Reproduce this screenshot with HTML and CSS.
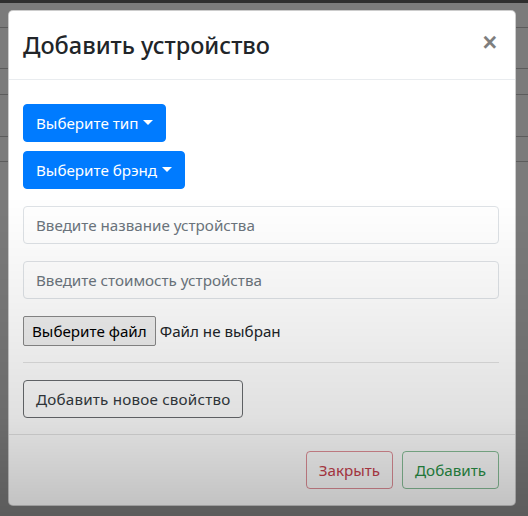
FILE: index.html
```html
<!DOCTYPE html>
<html lang="ru">
<head>
<meta charset="utf-8">
<title>Добавить устройство</title>
<link rel="stylesheet" href="styles.css">
</head>
<body>
<div class="page">
  <div class="topbar"></div>
  <div class="bg-row h25"></div>
  <div class="bg-row h41"></div>
  <div class="bg-row h26"></div>
  <div class="bg-row h42"></div>
  <div class="bg-row h25"></div>
</div>

<div class="modal">
  <div class="modal-content">
    <div class="modal-header">
      <h4 class="modal-title">Добавить устройство</h4>
      <button class="close" type="button">×</button>
    </div>
    <div class="modal-body">
      <div class="stack">
        <div class="dropdown first"><button class="btn btn-primary dropdown-toggle" type="button">Выберите тип</button></div>
        <div class="dropdown second"><button class="btn btn-primary dropdown-toggle" type="button">Выберите брэнд</button></div>
        <input class="form-control gap" type="text" placeholder="Введите название устройства">
        <input class="form-control gap" type="text" placeholder="Введите стоимость устройства">
        <div class="file gap"><span class="file-btn">Выберите файл</span><span class="file-name">Файл не выбран</span></div>
        <hr class="divider">
        <div><button class="btn btn-outline-dark" type="button">Добавить новое свойство</button></div>
      </div>
    </div>
    <div class="modal-footer">
      <button class="btn btn-outline-danger" type="button">Закрыть</button>
      <button class="btn btn-outline-success" type="button">Добавить</button>
    </div>
  </div>
</div>
<div class="shade"></div>
</body>
</html>
```
FILE: styles.css
```css
* { box-sizing: border-box; }
html, body { margin: 0; padding: 0; }
body {
  width: 528px;
  height: 516px;
  overflow: hidden;
  background: #7b7b7b;
  font-family: "Noto Sans", "Open Sans", sans-serif;
  font-size: 15.2px;
  color: #212529;
}
.page { display: flex; flex-direction: column; }
.topbar { height: 3px; background: #2e2e2e; }
.bg-row { border-bottom: 1px solid #5c5c5c; }
.h25 { height: 25px; }
.h26 { height: 26px; }
.h41 { height: 41px; }
.h42 { height: 42px; }

.modal {
  position: absolute;
  left: 8px;
  top: 10px;
  width: 508px;
}
.modal-content {
  background: #fff;
  border: 1px solid rgba(0,0,0,.2);
  border-radius: 5px;
  display: flex;
  flex-direction: column;
}
.modal-header {
  display: flex;
  align-items: flex-start;
  padding: 16px 16px 16px 14px;
  border-bottom: 1px solid #e9ecef;
}
.modal-title {
  margin: 0;
  font-size: 23.5px;
  font-weight: 500;
  line-height: 36px;
  color: #212529;
}
.close {
  margin: -16px -16px -16px auto;
  padding: 18px 18px 14px 16px;
  background: transparent;
  border: 0;
  font-family: "Liberation Sans", Arial, sans-serif;
  font-size: 25px;
  font-weight: 700;
  line-height: 26px;
  color: #000;
  opacity: .5;
}
.modal-body { padding: 16px 16px 16px 14px; }
.stack { display: flex; flex-direction: column; align-items: stretch; }
.first { margin-top: 8px; }
.second { margin-top: 9px; }
.gap { margin-top: 17px; }

.btn {
  display: inline-block;
  font-family: inherit;
  font-size: 15.2px;
  line-height: 24px;
  padding: 6px 12px;
  border: 1px solid transparent;
  border-radius: 4px;
  background: transparent;
  height: 38px;
}
.btn-primary { background: #007bff; border-color: #007bff; color: #fff; }
.dropdown-toggle::after {
  content: "";
  display: inline-block;
  margin-left: 5px;
  vertical-align: 4px;
  border-top: 5px solid #fff;
  border-right: 5px solid transparent;
  border-left: 5px solid transparent;
}
.btn-outline-dark { border-color: #6a6d70; color: #343a40; letter-spacing: 0.2px; }
.btn-outline-danger { border-color: rgba(205, 70, 85, .6); color: #c9414e; }
.btn-outline-success { border-color: rgba(40, 140, 70, .55); color: #2a9347; }

.form-control {
  display: block;
  width: 100%;
  height: 38px;
  padding: 6px 12px;
  font-family: inherit;
  font-size: 15.2px;
  line-height: 24px;
  color: #495057;
  border: 1px solid #dee2e6;
  border-radius: 4px;
  background: #fff;
}
.form-control::placeholder { color: #6c757d; opacity: 1; }

.file { display: flex; align-items: center; height: 30px; }
.file-btn {
  height: 30px;
  padding: 2px 8px;
  line-height: 24px;
  background: #efefef;
  border: 1px solid #8a8a8a;
  border-radius: 2px;
  color: #000;
}
.file-name { margin-left: 4px; color: #212529; }

.divider {
  margin: 16px 0 17px;
  border: 0;
  border-top: 1px solid #e4e4e4;
  width: 100%;
}

.modal-footer {
  display: flex;
  justify-content: flex-end;
  align-items: center;
  padding: 12px;
  border-top: 1px solid #e4e4e4;
}
.modal-footer .btn { margin: 4px; }
.modal-footer .btn + .btn { margin-left: 5px; }

.shade {
  position: fixed;
  inset: 0;
  pointer-events: none;
  background: linear-gradient(to bottom,
    rgba(0,0,0,0) 0%,
    rgba(0,0,0,0) 38%,
    rgba(0,0,0,.05) 58%,
    rgba(0,0,0,.12) 81%,
    rgba(0,0,0,.25) 100%);
}
```
